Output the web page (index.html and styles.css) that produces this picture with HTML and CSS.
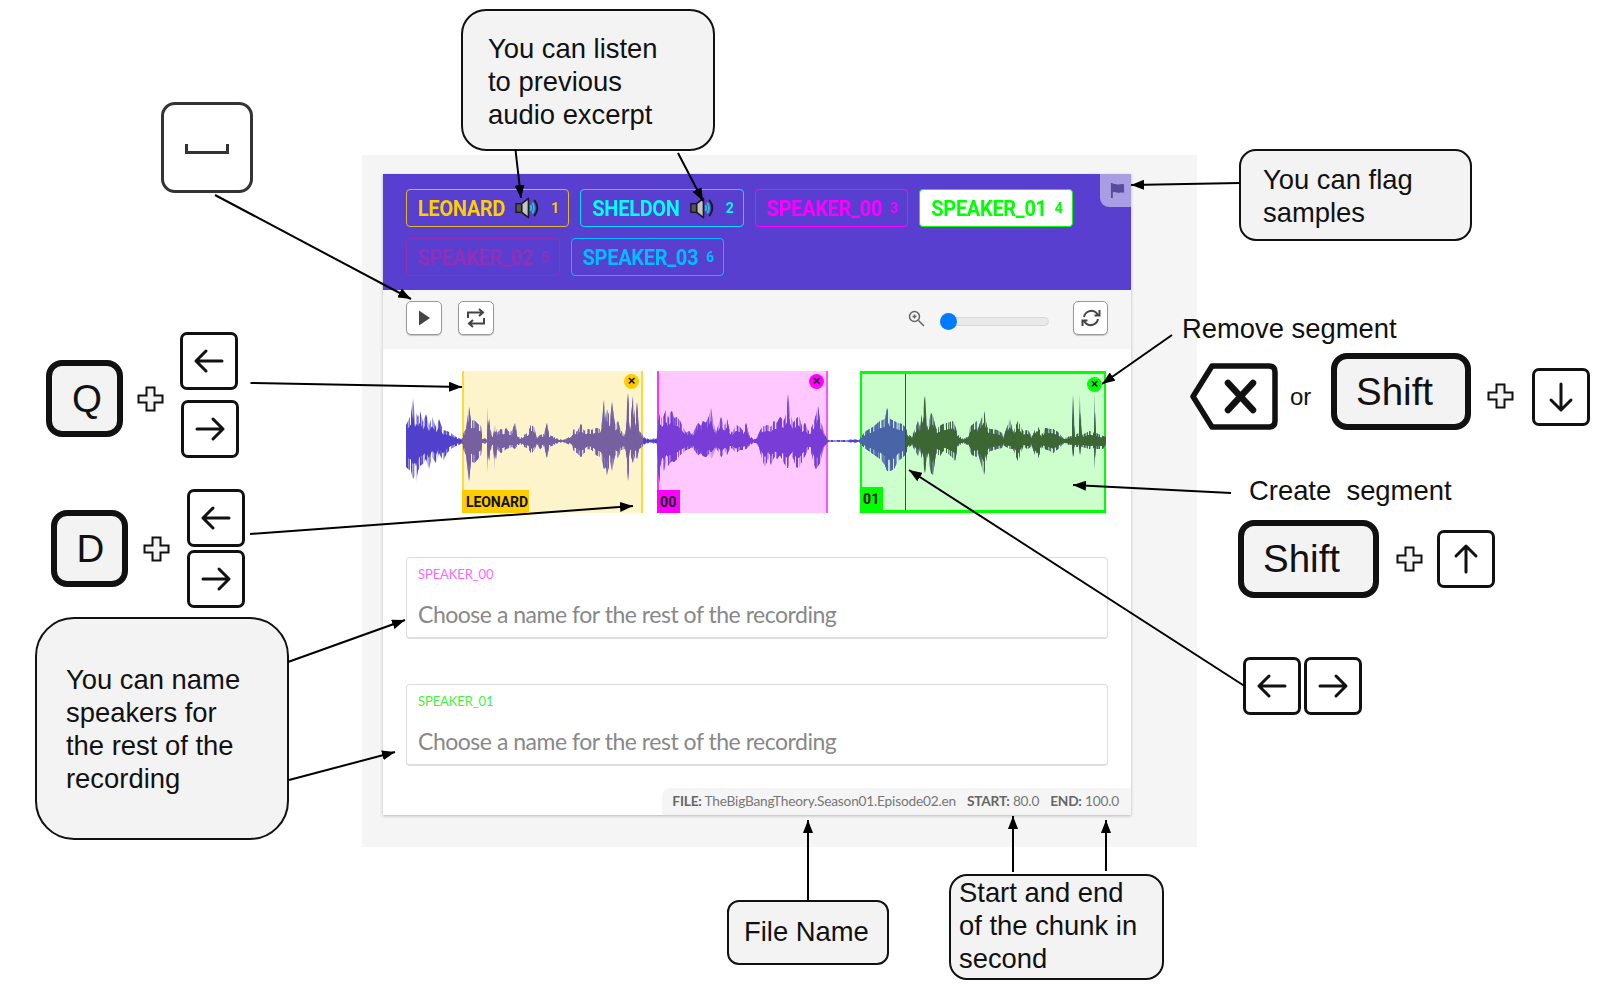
FILE: index.html
```html
<!DOCTYPE html>
<html lang="en">
<head>
<meta charset="utf-8">
<title>Annotation interface guide</title>
<link rel="stylesheet" href="styles.css">
</head>
<body>
<svg class="defs" aria-hidden="true">
  <defs>
    <symbol id="arrow-left" viewBox="0 0 56 56"><path d="M15 28H41M25 18L15 28L25 38"/></symbol>
    <symbol id="arrow-right" viewBox="0 0 56 56"><path d="M15 28H41M31 18L41 28L31 38"/></symbol>
    <symbol id="arrow-up" viewBox="0 0 56 56"><path d="M28 15V41M18 25L28 15L38 25"/></symbol>
    <symbol id="arrow-down" viewBox="0 0 56 56"><path d="M28 15V41M18 31L28 41L38 31"/></symbol>
    <symbol id="plus" viewBox="0 0 27 26"><path d="M9.500 1.500H17.500V9.500H25.500V16.500H17.500V24.500H9.500V16.500H1.500V9.500H9.500Z"/></symbol>
    <symbol id="speaker" viewBox="0 0 26 22">
      <rect class="sp-box" x="1" y="6.500" width="6" height="9"/>
      <path class="sp-cone" d="M7 6.500L14 1V21L7 15.500Z"/>
      <path class="sp-wave" d="M16 8Q18 11 16 14M18 5.500Q21.500 11 18 16.500"/>
      <path class="sp-edge" d="M20 2.500Q26.500 11 20 19.500"/>
    </symbol>
    <g id="wave">
      <g transform="translate(0 70) scale(1 -1)">
        <polygon points="0,0 0,16 2,20 5,27 7,43 9,22 10,28 12,24 14,30 17,19 20,27 23,16 26,24 30,14 33,22 37,11 41,10 45,8 50,4 55,2 56,3 58,9 60,12 63,34 65,20 68,21 72,17 75,15 76,3 81,2 82,34 84,12 87,5 89,16 91,8 95,12 98,10 100,13 103,9 106,10 109,18 112,4 115,3 118,6 122,8 125,16 128,14 131,3 134,6 138,7 141,18 143,6 148,4 152,2 157,1 162,3 165,6 168,12 171,9 175,17 178,10 182,12 186,11 190,13 194,12 196,20 198,41 200,18 201,32 204,22 206,39 209,16 212,20 215,10 219,6 222,48 224,14 227,45 229,20 231,39 233,10 236,7 239,3 243,2 247,3 250,2 251,4 252,18 254,27 256,22 258,26 260,31 262,22 264,28 266,30 268,23 271,24 274,20 277,14 280,8 283,10 286,6 289,12 292,18 295,15 297,20 300,18 303,25 305,33 307,20 310,8 313,18 315,24 317,18 319,16 321,22 323,13 326,8 330,16 334,14 337,10 340,18 343,6 347,2 350,2 353,8 356,14 359,15 362,16 365,14 368,20 371,18 374,24 378,20 381,30 382,47 384,28 387,18 390,22 393,25 396,14 399,18 402,10 405,12 408,20 410,26 412,35 414,20 416,16 418,8 421,2 424,1 440,1 448,2 452,1 454,3 460,10 467,14 474,20 479,22 481,33 484,22 488,20 492,18 496,17 499,14 503,6 506,4 512,20 514,14 519,45 521,12 525,28 527,25 530,12 534,15 537,17 541,18 547,20 549,15 552,6 557,2 562,4 564,14 566,16 571,20 572,12 578,30 581,14 584,12 591,11 596,8 597,3 604,22 607,8 612,20 617,10 622,11 626,4 631,16 636,6 639,13 644,12 647,12 652,9 657,3 666,5 667,46 669,6 673,8 674,46 676,6 684,10 688,8 689,48 690,8 692,7 697,5 700,4 700,0"/>
      </g>
      <g transform="translate(0 70)">
        <polygon points="0,0 0,26 2,28 5,30 7,38 9,35 10,41 12,30 14,25 17,23 20,18 23,28 26,16 30,22 33,12 37,20 41,12 45,8 50,5 55,3 56,3 58,10 60,14 63,40 65,20 68,22 72,18 75,14 76,3 81,2 82,31 84,10 87,5 89,30 91,8 95,12 98,10 100,8 103,7 106,6 109,8 112,4 115,3 118,6 122,7 125,12 128,10 131,3 134,8 138,5 141,17 143,6 148,4 152,2 157,1 162,3 165,4 168,10 171,12 175,16 178,12 182,8 186,9 190,14 194,16 196,20 198,28 200,26 201,34 204,20 206,30 209,14 212,17 215,9 219,8 222,40 224,12 227,22 229,14 231,18 233,8 236,6 239,3 243,2 247,3 250,2 251,4 252,30 254,42 256,26 258,30 260,22 262,25 264,22 266,20 268,21 271,18 274,14 277,12 280,9 283,8 286,6 289,10 292,14 295,12 297,15 300,16 303,13 305,18 307,15 310,6 313,12 315,16 317,14 319,10 321,14 323,9 326,7 330,12 334,9 337,9 340,8 343,5 347,2 350,2 353,6 356,18 359,26 362,17 365,24 368,16 371,18 374,14 378,22 381,27 382,27 384,22 387,16 390,26 393,27 396,20 399,15 402,8 405,10 408,24 410,28 412,25 414,22 416,14 418,6 421,2 424,1 440,1 448,2 452,1 454,3 460,8 467,13 474,18 479,24 481,30 484,30 488,28 492,20 496,17 499,14 503,6 506,4 512,15 514,8 519,32 521,12 525,32 527,34 530,12 534,15 537,10 541,12 547,17 549,20 552,5 557,2 562,4 564,10 566,14 571,16 572,12 578,34 581,14 584,10 591,8 596,7 597,4 604,8 607,8 612,20 617,6 622,8 626,5 631,20 636,6 639,8 644,10 647,12 652,8 657,3 666,4 667,16 669,6 673,6 674,14 676,6 684,8 688,7 689,28 690,8 692,8 697,8 700,3 700,0"/>
      </g>
    </g>
    <filter id="spikes" filterUnits="userSpaceOnUse" x="0" y="0" width="700" height="142" color-interpolation-filters="sRGB">
      <feTurbulence type="fractalNoise" baseFrequency="0.55 0.002" numOctaves="2" seed="7" result="noise"/>
      <feColorMatrix in="noise" type="matrix" values="0 0 0 0 0  0 0 0 0 0  0 0 0 0 0  5 0 0 0 -2" result="bars"/>
      <feComposite in="SourceGraphic" in2="bars" operator="in"/>
    </filter>
    <g id="wave-tex">
      <use href="#wave" filter="url(#spikes)"/>
      <g transform="translate(0 70) scale(1 .62) translate(0 -70)"><use href="#wave"/></g>
    </g>
    <clipPath id="clip-base"><rect x="0" y="0" width="700" height="142"/></clipPath>
    <clipPath id="clip-leonard"><rect x="56" y="0" width="181" height="142"/></clipPath>
    <clipPath id="clip-s00"><rect x="251" y="0" width="171" height="142"/></clipPath>
    <clipPath id="clip-played"><rect x="454" y="0" width="45" height="142"/></clipPath>
    <clipPath id="clip-s01"><rect x="499" y="0" width="201" height="142"/></clipPath>
    <marker id="head" viewBox="0 0 13 10" refX="13" refY="5" markerWidth="13" markerHeight="10" markerUnits="userSpaceOnUse" orient="auto"><path class="head" d="M0 0L13 5L0 10Z"/></marker>
  </defs>
</svg>

<main class="panel">
  <section class="card">
    <header class="speakers">
      <div class="chip c-leonard"><span class="chip-name">LEONARD</span><svg class="speaker"><use href="#speaker"/></svg><span class="chip-num">1</span></div>
      <div class="chip c-sheldon"><span class="chip-name">SHELDON</span><svg class="speaker"><use href="#speaker"/></svg><span class="chip-num">2</span></div>
      <div class="chip c-s00"><span class="chip-name">SPEAKER_00</span><span class="chip-num">3</span></div>
      <div class="chip c-s01"><span class="chip-name">SPEAKER_01</span><span class="chip-num">4</span></div>
      <div class="chip c-s02"><span class="chip-name">SPEAKER_02</span><span class="chip-num">5</span></div>
      <div class="chip c-s03"><span class="chip-name">SPEAKER_03</span><span class="chip-num">6</span></div>
      <div class="flag-tab">
        <svg class="flag" viewBox="0 0 16 16"><path d="M1 0H3V16H1ZM3 1C6 0 7 2 10 1.500S13 1 15 1.500V10.500C13 10 12 10 10 10.500S6 9 3 10Z"/></svg>
      </div>
    </header>

    <div class="toolbar">
      <button class="tool"><svg class="ico" viewBox="0 0 20 20"><path class="solid" d="M5 2.500L16 10L5 17.500Z"/></svg></button>
      <button class="tool"><svg class="ico ico-wide" viewBox="0 0 22 22"><path class="line" d="M3 11V5.500H17M14 2L18 5.500L14 9M19 11V16.500H5M8 13L4 16.500L8 20"/></svg></button>
      <div class="spacer"></div>
      <svg class="zoom-ico" viewBox="0 0 17 17"><circle cx="6.500" cy="6.500" r="5"/><path d="M10.500 10.500L16 16M4.500 6.500H8.500M6.500 4.500V8.500"/></svg>
      <div class="slider"><span class="thumb"></span></div>
      <button class="tool tool-reset"><svg class="ico ico-wide" viewBox="0 0 22 22"><path class="line" d="M4 10A7.500 7.500 0 0 1 16 5.500L18 8M18 12A7.500 7.500 0 0 1 6 16.500L4 14M19.500 3V8.500H14.500M2.500 19V13.500H7.500"/></svg></button>
    </div>

    <div class="timeline">
      <div class="region r-leonard"><span class="region-label">LEONARD</span><span class="remove">×</span></div>
      <div class="region r-s00"><span class="region-label">00</span><span class="remove">×</span></div>
      <div class="region r-s01"><span class="region-label">01</span><span class="remove">×</span></div>
      <svg class="wave" viewBox="0 0 700 142">
        <g clip-path="url(#clip-base)"><use class="w-base" href="#wave-tex"/></g>
        <g clip-path="url(#clip-leonard)"><use class="w-leonard" href="#wave-tex"/></g>
        <g clip-path="url(#clip-s00)"><use class="w-s00" href="#wave-tex"/></g>
        <g clip-path="url(#clip-played)"><use class="w-played" href="#wave-tex"/></g>
        <g clip-path="url(#clip-s01)"><use class="w-s01" href="#wave-tex"/></g>
      </svg>
      <span class="cursor"></span>
    </div>

    <div class="names">
      <div class="field">
        <span class="field-label l-s00">SPEAKER_00</span>
        <span class="field-hint">Choose a name for the rest of the recording</span>
      </div>
      <div class="field">
        <span class="field-label l-s01">SPEAKER_01</span>
        <span class="field-hint">Choose a name for the rest of the recording</span>
      </div>
    </div>

    <footer class="meta">
      <span><b>FILE:</b> TheBigBangTheory.Season01.Episode02.en</span>
      <span><b>START:</b> 80.0</span>
      <span><b>END:</b> 100.0</span>
    </footer>
  </section>
</main>

<div class="note n-listen">You can listen<br>to previous<br>audio excerpt</div>
<div class="note n-flag">You can flag<br>samples</div>
<div class="note n-name">You can name<br>speakers for<br>the rest of the<br>recording</div>
<div class="note n-file">File Name</div>
<div class="note n-start">Start and end<br>of the chunk in<br>second</div>

<div class="label t-remove">Remove segment</div>
<div class="label t-or">or</div>
<div class="label t-create">Create  segment</div>

<div class="space-key"><svg viewBox="0 0 44 10"><path d="M1.500 0V8.500H42.500V0"/></svg></div>

<div class="bigkey k-q">Q</div>
<div class="bigkey k-d">D</div>
<div class="bigkey k-shift k-shift1">Shift</div>
<div class="bigkey k-shift k-shift2">Shift</div>

<svg class="backspace" viewBox="0 0 90 68"><path class="bs-body" d="M4 33.500L23 3H80Q86 3 86 9V58Q86 64 80 64H23Z"/><path class="bs-x" d="M39 20L64 47M64 20L39 47"/></svg>

<svg class="plus p-q"><use href="#plus"/></svg>
<svg class="plus p-d"><use href="#plus"/></svg>
<svg class="plus p-remove"><use href="#plus"/></svg>
<svg class="plus p-create"><use href="#plus"/></svg>

<div class="key a-q1"><svg><use href="#arrow-left"/></svg></div>
<div class="key a-q2"><svg><use href="#arrow-right"/></svg></div>
<div class="key a-d1"><svg><use href="#arrow-left"/></svg></div>
<div class="key a-d2"><svg><use href="#arrow-right"/></svg></div>
<div class="key a-down"><svg><use href="#arrow-down"/></svg></div>
<div class="key a-up"><svg><use href="#arrow-up"/></svg></div>
<div class="key a-left"><svg><use href="#arrow-left"/></svg></div>
<div class="key a-right"><svg><use href="#arrow-right"/></svg></div>

<svg class="arrows" viewBox="0 0 1610 987">
  <line x1="215" y1="195" x2="411" y2="299"/>
  <line x1="515.500" y1="150" x2="521" y2="198"/>
  <line x1="678" y1="153" x2="703" y2="201"/>
  <line x1="1240" y1="183" x2="1131" y2="185"/>
  <line x1="250.500" y1="383" x2="462" y2="387"/>
  <line x1="250" y1="534" x2="633" y2="506"/>
  <line x1="1172" y1="335" x2="1102" y2="384"/>
  <line x1="1231" y1="493" x2="1073" y2="485"/>
  <line x1="1244.500" y1="686" x2="909" y2="470"/>
  <line x1="288" y1="662" x2="405" y2="620"/>
  <line x1="289" y1="780" x2="395" y2="752"/>
  <line x1="808" y1="901" x2="808" y2="820"/>
  <line x1="1013" y1="872" x2="1013" y2="816"/>
  <line x1="1106" y1="871" x2="1106" y2="820"/>
</svg>
</body>
</html>
```

FILE: styles.css
```css
* { box-sizing: border-box; }

html, body { margin: 0; padding: 0; background: #fff; }

body {
  position: relative;
  width: 1610px;
  height: 987px;
  overflow: hidden;
  font-family: "Liberation Sans", Arial, sans-serif;
  color: #111;
}

.defs { position: absolute; width: 0; height: 0; }

/* ---------- the app screenshot ---------- */
.panel {
  position: absolute;
  left: 362px;
  top: 155px;
  width: 835px;
  height: 692px;
  padding: 19px 66px 32px 21px;
  background: #f5f5f5;
}

.card {
  display: flex;
  flex-direction: column;
  height: 641px;
  background: #fff;
  box-shadow: 0 1px 3px rgba(0, 0, 0, .25);
  font-family: Lato, sans-serif;
}

.speakers {
  position: relative;
  display: flex;
  flex-wrap: wrap;
  align-content: flex-start;
  gap: 11px;
  height: 116px;
  padding: 15px 30px 0 23px;
  background: #583fcf;
  font-family: Roboto, sans-serif;
}

.chip {
  display: flex;
  align-items: center;
  height: 38px;
  padding: 0 9px 0 11px;
  border: 1px solid currentColor;
  border-radius: 4px;
  font-weight: 700;
}
.chip-name { display: inline-block; font-size: 20px; letter-spacing: -.3px; transform: scaleY(1.08); }
.chip-num { margin-left: 8px; font-size: 14px; transform: scaleY(1.08); }
.speaker { width: 25px; height: 22px; margin-left: 10px; margin-right: 3px; }
.sp-box { fill: #555; stroke: #1c1c1c; stroke-width: 1.5; }
.sp-cone { fill: #c4c4c4; stroke: #1c1c1c; stroke-width: 1.7; stroke-linejoin: round; }
.sp-wave { fill: none; stroke: #22c2d2; stroke-width: 2; }
.sp-edge { fill: none; stroke: #1c1c1c; stroke-width: 2; }

.c-leonard { color: #ffd000; border-color: #e2b62e; }
.c-sheldon { color: #00ffff; border-color: #00e0ff; }
.c-s00 { color: #ff00ff; }
.c-s01 { color: #00ff00; background: #fff; }
.c-s02 { color: #9030b8; }
.c-s03 { color: #00bfff; }

.flag-tab {
  position: absolute;
  top: 0;
  right: 0;
  display: flex;
  align-items: center;
  justify-content: center;
  width: 31px;
  height: 33px;
  padding-left: 3px;
  background: #a99de3;
  border-bottom-left-radius: 9px;
}
.flag { width: 15px; height: 15px; fill: #5a4a9e; }

.toolbar {
  display: flex;
  align-items: center;
  gap: 16px;
  height: 59px;
  padding: 0 23px 3px 23px;
  background: #f5f5f5;
}
.tool {
  display: flex;
  align-items: center;
  justify-content: center;
  width: 36px;
  height: 34px;
  padding: 0;
  background: #fff;
  border: 1px solid #999;
  border-radius: 5px;
  box-shadow: 0 1px 1px rgba(0, 0, 0, .2);
}
.tool-reset { width: 35px; }
.ico { width: 20px; height: 20px; }
.ico-wide { width: 22px; height: 22px; }
.solid { fill: #444; }
.line { fill: none; stroke: #444; stroke-width: 2; }
.spacer { flex: 1; }
.zoom-ico {
  width: 17px;
  height: 17px;
  margin-top: 1px;
  fill: none;
  stroke: #666;
  stroke-width: 1.5;
}
.slider {
  display: flex;
  align-items: center;
  width: 109px;
  height: 9px;
  margin: 7px 8px 0 -1px;
  background: #e9e9e9;
  border: 1px solid #d8d8d8;
  border-radius: 5px;
}
.thumb {
  width: 17px;
  height: 17px;
  margin-left: -1px;
  background: #007bff;
  border-radius: 50%;
}

.timeline {
  position: relative;
  height: 142px;
  margin: 22px 0 44px;
}
.wave {
  position: absolute;
  left: 23px;
  top: 0;
  width: 700px;
  height: 142px;
  filter: blur(.3px);
}
.w-base { fill: #5140cc; }
.w-leonard { fill: #76609f; }
.w-s00 { fill: #7a3cd6; }
.w-played { fill: #4a64a8; }
.w-s01 { fill: #3c6632; }

.region {
  position: absolute;
  top: 0;
  height: 142px;
}
.r-leonard {
  left: 79px;
  width: 181px;
  background: #fdf4cc;
  border-left: 2px solid #ffd83a;
  border-right: 2px solid #ffd83a;
}
.r-s00 {
  left: 274px;
  width: 171px;
  background: #ffc8ff;
  border-left: 2px solid #ff33ff;
  border-right: 2px solid #ff55ff;
}
.r-s01 {
  left: 477px;
  width: 246px;
  background: #ccffcc;
  border: 3px solid #00ff00;
  border-left-width: 2px;
  border-right-width: 2px;
}
.region-label {
  position: absolute;
  bottom: 0;
  left: -2px;
  z-index: 2;
  height: 23px;
  padding: 0 4px;
  font-family: Roboto, sans-serif;
  font-size: 14px;
  font-weight: 700;
  line-height: 24px;
  letter-spacing: -.1px;
  color: #111;
}
.r-leonard .region-label { background: #ffcc00; width: 67px; }
.r-s00 .region-label { background: #ff00ff; width: 23px; padding: 0 3px; letter-spacing: .3px; }
.r-s01 .region-label { background: #00ff00; width: 23px; padding: 0 3px; letter-spacing: .3px; }

.remove {
  position: absolute;
  z-index: 2;
  top: 3px;
  right: 2px;
  width: 15px;
  height: 15px;
  border-radius: 50%;
  font-family: "Liberation Sans", sans-serif;
  font-size: 13px;
  font-weight: 700;
  line-height: 13px;
  text-align: center;
  color: #111;
}
.r-leonard .remove { background: #ffcc00; }
.r-s00 .remove { background: #ff00ff; }
.r-s01 .remove { top: 3px; right: 2px; background: #00ff00; }

.cursor {
  position: absolute;
  left: 522px;
  top: 3px;
  width: 1px;
  height: 136px;
  background: #2f5a2f;
}

.names {
  display: flex;
  flex-direction: column;
  gap: 45px;
  padding: 0 23px;
}
.field {
  display: flex;
  flex-direction: column;
  height: 82px;
  padding: 7px 11px 0;
  background: #fff;
  border: 1px solid #ddd;
  border-bottom-width: 2px;
  border-radius: 4px;
}
.field-label {
  font-size: 13px;
  line-height: 18px;
  letter-spacing: -.1px;
}
.l-s00 { color: #ff66ff; }
.l-s01 { color: #44f044; }
.field-hint {
  margin-top: 17px;
  font-size: 23px;
  line-height: 28px;
  letter-spacing: -.48px;
  color: #888;
}

.meta {
  display: flex;
  align-self: flex-end;
  gap: 11px;
  height: 27px;
  margin-top: 22px;
  padding: 0 12px 0 10px;
  background: #f5f5f5;
  border-top-left-radius: 8px;
  font-size: 13.700px;
  line-height: 26px;
  letter-spacing: -.2px;
  color: #777;
}
.meta b { color: #666; }

/* ---------- annotations on the diagram ---------- */
.note {
  position: absolute;
  background: #f3f3f3;
  border: 2px solid #111;
  font-size: 27.400px;
  line-height: 33px;
}
.n-listen { left: 461px; top: 9px; width: 254px; height: 142px; padding: 21px 0 0 25px; border-radius: 25px; }
.n-flag { left: 1239px; top: 149px; width: 233px; height: 92px; padding: 12px 0 0 22px; border-radius: 17px; }
.n-name { left: 35px; top: 617px; width: 254px; height: 223px; padding: 44px 0 0 29px; border-radius: 39px; }
.n-file { left: 727px; top: 900px; width: 162px; height: 65px; padding: 13px 0 0 15px; border-radius: 12px; }
.n-start { left: 949px; top: 874px; width: 215px; height: 106px; padding: 0 0 0 8px; border-radius: 18px; }

.label {
  position: absolute;
  font-size: 27.400px;
  line-height: 33px;
  white-space: pre;
}
.t-remove { left: 1182px; top: 312px; }
.t-or { left: 1290px; top: 380px; font-size: 24px; }
.t-create { left: 1249px; top: 474px; }

.space-key {
  position: absolute;
  left: 161px;
  top: 102px;
  display: flex;
  align-items: center;
  justify-content: center;
  width: 92px;
  height: 91px;
  padding-top: 2px;
  background: #fff;
  border: 3px solid #333;
  border-radius: 14px;
}
.space-key svg {
  width: 44px;
  height: 10px;
  fill: none;
  stroke: #333;
  stroke-width: 3;
}

.bigkey {
  position: absolute;
  display: flex;
  align-items: center;
  justify-content: center;
  background: #f3f3f3;
  border: 6px solid #111;
  border-radius: 16px;
  font-size: 38.500px;
}
.k-shift { justify-content: flex-start; padding-left: 19px; }
.k-q { left: 46px; top: 360px; width: 77px; height: 77px; padding-left: 5px; }
.k-d { left: 51px; top: 510px; width: 77px; height: 77px; padding-left: 2px; }
.k-shift1 { left: 1331px; top: 353px; width: 140px; height: 77px; }
.k-shift2 { left: 1238px; top: 520px; width: 141px; height: 78px; }

.backspace {
  position: absolute;
  left: 1189px;
  top: 363px;
  width: 90px;
  height: 68px;
}
.bs-body { fill: #fff; stroke: #111; stroke-width: 5.500; stroke-linejoin: round; }
.bs-x { fill: none; stroke: #111; stroke-width: 6.500; stroke-linecap: round; }

.plus {
  position: absolute;
  width: 27px;
  height: 26px;
  fill: #f3f3f3;
  stroke: #111;
  stroke-width: 2;
}
.p-q { left: 137px; top: 386px; }
.p-d { left: 143px; top: 536px; }
.p-remove { left: 1487px; top: 383px; }
.p-create { left: 1396px; top: 546px; }

.key {
  position: absolute;
  width: 58px;
  height: 58px;
  background: #fff;
  border: 3.500px solid #111;
  border-radius: 7px;
}
.key svg {
  position: absolute;
  left: -2.500px;
  top: -2.500px;
  width: 56px;
  height: 56px;
  fill: none;
  stroke: #111;
  stroke-width: 3;
  stroke-linecap: round;
  stroke-linejoin: round;
}
.a-q1 { left: 180px; top: 332px; }
.a-q2 { left: 181px; top: 400px; }
.a-d1 { left: 187px; top: 489px; }
.a-d2 { left: 187px; top: 550px; }
.a-down { left: 1532px; top: 368px; }
.a-up { left: 1437px; top: 530px; }
.a-left { left: 1243px; top: 657px; }
.a-right { left: 1304px; top: 657px; }

.arrows {
  position: absolute;
  left: 0;
  top: 0;
  width: 1610px;
  height: 987px;
  pointer-events: none;
}
.arrows line {
  stroke: #000;
  stroke-width: 2;
  marker-end: url(#head);
}
.head { fill: #000; }
```
